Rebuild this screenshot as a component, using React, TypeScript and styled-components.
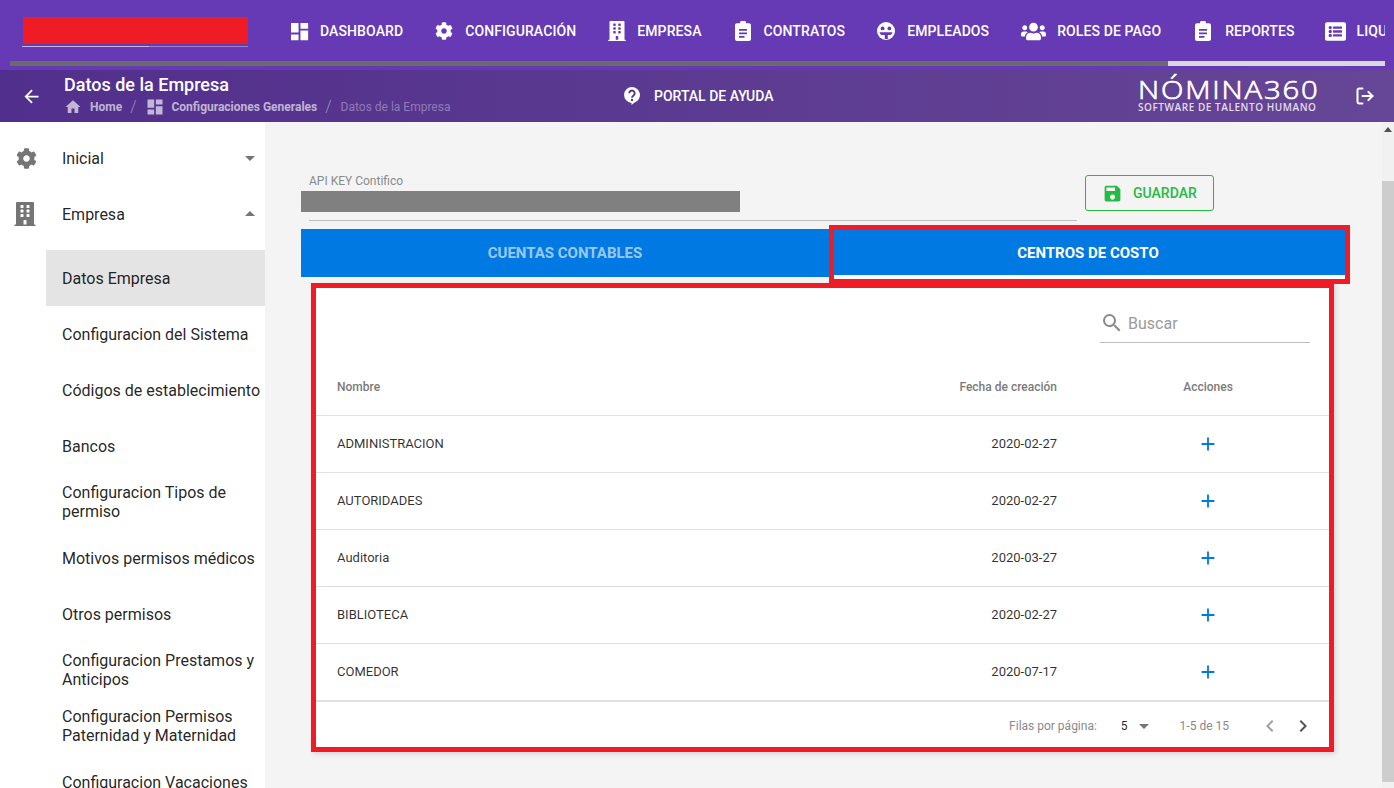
import React from 'react';
import styled, { createGlobalStyle } from 'styled-components';
import { FaBuilding, FaCog, FaListAlt, FaUsers } from 'react-icons/fa';
import {
  MdAdd,
  MdArrowBack,
  MdArrowDropDown,
  MdArrowDropUp,
  MdChevronLeft,
  MdChevronRight,
  MdDashboard,
  MdHome,
  MdSave,
  MdSearch
} from 'react-icons/md';
import { LogOut } from 'lucide-react';

const GlobalStyle = createGlobalStyle`
  html, body {
    margin: 0;
    height: 100%;
    overflow: hidden;
    font-family: Roboto, "Liberation Sans", sans-serif;
    background: #f4f4f4;
  }
  * {
    box-sizing: border-box;
  }
`;

const FaceIcon = () => (
  <svg width="18" height="18" viewBox="0 0 18 18">
    <circle cx="9" cy="9" r="9" fill="#fff" />
    <circle cx="5.6" cy="6.4" r="1.9" fill="#6639b5" />
    <circle cx="12.4" cy="6.4" r="1.9" fill="#6639b5" />
    <path d="M2.5 10.2h13c-.2 1.2-.9 2.2-2 2.8h-2.7v4h-3v-4H4.500c-1.100-.6-1.800-1.600-2-2.800z" fill="#6639b5" />
  </svg>
);

const HelpIcon = () => (
  <svg width="16" height="18" viewBox="0 0 16 18">
    <path d="M8 0a8 8 0 0 1 2.300 15.660L7.500 18v-2.020A8 8 0 0 1 8 0z" fill="#fff" />
    <path d="M5.300 6.200a2.700 2.700 0 1 1 4.300 2.200c-1 .7-1.600 1.100-1.600 2.300" fill="none" stroke="#58348f" strokeWidth="1.900" />
    <circle cx="8" cy="13" r="1.200" fill="#58348f" />
  </svg>
);

const ClipboardIcon = () => (
  <svg width="16" height="20" viewBox="0 0 16 20">
    <path
      d="M5 2.200V1.500C5 .7 5.700 0 6.500 0h3c.8 0 1.500.7 1.500 1.500v.7h3c1.100 0 2 .9 2 2V18c0 1.100-.9 2-2 2H2c-1.100 0-2-.9-2-2V4.200c0-1.100.9-2 2-2h3z"
      fill="#fff"
    />
    <path d="M4 8h8v1.700H4zM4 11.500h8v1.700H4zM4 15h5.500v1.700H4z" fill="#6639b5" />
  </svg>
);

const navItems = [
  { label: 'DASHBOARD', icon: <MdDashboard size={23} />, slot: 17 },
  { label: 'CONFIGURACIÓN', icon: <FaCog size={18} />, slot: 18 },
  { label: 'EMPRESA', icon: <FaBuilding size={20} />, slot: 17 },
  { label: 'CONTRATOS', icon: <ClipboardIcon />, slot: 18 },
  { label: 'EMPLEADOS', icon: <FaceIcon />, slot: 18 },
  { label: 'ROLES DE PAGO', icon: <FaUsers size={25} />, slot: 24 },
  { label: 'REPORTES', icon: <ClipboardIcon />, slot: 20 },
  { label: 'LIQUIDACIONES', icon: <FaListAlt size={21} />, slot: 18 }
];

const menuItems = [
  'Configuracion del Sistema',
  'Códigos de establecimiento',
  'Bancos',
  'Configuracion Tipos de permiso',
  'Motivos permisos médicos',
  'Otros permisos',
  'Configuracion Prestamos y Anticipos',
  'Configuracion Permisos Paternidad y Maternidad',
  'Configuracion Vacaciones'
];

const costCenters = [
  { name: 'ADMINISTRACION', date: '2020-02-27' },
  { name: 'AUTORIDADES', date: '2020-02-27' },
  { name: 'Auditoria', date: '2020-03-27' },
  { name: 'BIBLIOTECA', date: '2020-02-27' },
  { name: 'COMEDOR', date: '2020-07-17' }
];

export default function App() {
  return (
    <Page>
      <GlobalStyle />
      <TopBar>
        <TopRow>
          <Brand>
            <RedactedName />
            <BrandLine />
          </Brand>
          <Nav>
            {navItems.map((item) => (
              <NavItem key={item.label}>
                <NavIcon $width={item.slot}>{item.icon}</NavIcon>
                {item.label}
              </NavItem>
            ))}
          </Nav>
        </TopRow>
        <NavScrollTrack>
          <NavScrollThumb />
        </NavScrollTrack>
      </TopBar>

      <SubHeader>
        <BackButton>
          <MdArrowBack size={21} />
        </BackButton>
        <TitleBlock>
          <PageTitle>Datos de la Empresa</PageTitle>
          <Breadcrumb>
            <MdHome size={18} />
            <Crumb>Home</Crumb>
            <CrumbSlash>/</CrumbSlash>
            <CrumbIcon>
              <MdDashboard size={20} />
            </CrumbIcon>
            <Crumb>Configuraciones Generales</Crumb>
            <CrumbSlash>/</CrumbSlash>
            <CrumbCurrent>Datos de la Empresa</CrumbCurrent>
          </Breadcrumb>
        </TitleBlock>
        <HelpLink>
          <HelpIcon />
          PORTAL DE AYUDA
        </HelpLink>
        <Logo>
          <LogoName>NÓMINA360</LogoName>
          <LogoTag>SOFTWARE DE TALENTO HUMANO</LogoTag>
        </Logo>
        <LogoutButton>
          <LogOut size={20} strokeWidth={2.4} />
        </LogoutButton>
      </SubHeader>

      <Body>
        <Sidebar>
          <MenuHead>
            <MenuIcon $inset={3}>
              <FaCog size={21} />
            </MenuIcon>
            <MenuHeadLabel>Inicial</MenuHeadLabel>
            <MdArrowDropDown size={24} />
          </MenuHead>
          <MenuHead>
            <MenuIcon $inset={0}>
              <FaBuilding size={24} />
            </MenuIcon>
            <MenuHeadLabel>Empresa</MenuHeadLabel>
            <MdArrowDropUp size={24} />
          </MenuHead>
          <SubMenu>
            <SubItem $active>Datos Empresa</SubItem>
            {menuItems.map((label) => (
              <SubItem key={label}>{label}</SubItem>
            ))}
          </SubMenu>
        </Sidebar>

        <Main>
          <FormRow>
            <Field>
              <FieldLabel>API KEY Contifico</FieldLabel>
              <RedactedValue />
              <FieldLine />
            </Field>
            <SaveButton>
              <MdSave size={21} />
              GUARDAR
            </SaveButton>
          </FormRow>

          <Tabs>
            <Tab $width={528}>CUENTAS CONTABLES</Tab>
            <ActiveTab $width={518}>CENTROS DE COSTO</ActiveTab>
          </Tabs>

          <Card>
            <Toolbar>
              <SearchBox>
                <MdSearch size={24} />
                Buscar
              </SearchBox>
            </Toolbar>
            <HeadRow>
              <NameCell>Nombre</NameCell>
              <DateCell>Fecha de creación</DateCell>
              <ActionCell>Acciones</ActionCell>
            </HeadRow>
            {costCenters.map((row) => (
              <DataRow key={row.name}>
                <NameCell>{row.name}</NameCell>
                <DateCell>{row.date}</DateCell>
                <ActionCell>
                  <MdAdd size={22} />
                </ActionCell>
              </DataRow>
            ))}
            <TableFooter>
              <FooterText>Filas por página:</FooterText>
              <PageSize>
                5
                <MdArrowDropDown size={24} />
              </PageSize>
              <FooterRange>1-5 de 15</FooterRange>
              <PagerButton $disabled>
                <MdChevronLeft size={24} />
              </PagerButton>
              <PagerButton>
                <MdChevronRight size={24} />
              </PagerButton>
            </TableFooter>
          </Card>
        </Main>

        <PageScroll>
          <ScrollArrow />
          <PageScrollThumb />
        </PageScroll>
      </Body>
    </Page>
  );
}

const Page = styled.div`
  height: 788px;
  display: flex;
  flex-direction: column;
  overflow: hidden;
  background: #f4f4f4;
`;

const TopBar = styled.header`
  height: 70px;
  flex: none;
  background: #6639b5;
`;

const TopRow = styled.div`
  height: 61px;
  display: flex;
  padding: 17px 9px 0 22px;
`;

const Brand = styled.div`
  width: 226px;
  flex: none;
`;

const RedactedName = styled.div`
  height: 27px;
  margin-left: 1px;
  background: #ef1c25;
`;

const BrandLine = styled.div`
  height: 1px;
  margin-top: 2px;
  background: linear-gradient(to right, #c4b6dc 56%, #9c84c9 56%);
`;

const Nav = styled.nav`
  display: flex;
  gap: 32px;
  height: 28px;
  margin-left: 43px;
  overflow: hidden;
  flex: 1;
`;

const NavItem = styled.a`
  display: flex;
  align-items: center;
  gap: 12px;
  flex: none;
  color: #fff;
  font-size: 14px;
  font-weight: 500;
  letter-spacing: 0.1px;
`;

const NavIcon = styled.span<{ $width: number }>`
  display: flex;
  justify-content: center;
  width: ${(p) => p.$width}px;

  svg {
    flex: none;
  }
`;

const NavScrollTrack = styled.div`
  height: 5px;
  width: 1375px;
  margin-left: 10px;
  background: #d9d9d9;
`;

const NavScrollThumb = styled.div`
  height: 100%;
  width: 1158px;
  background: #6b6b6b;
`;

const SubHeader = styled.div`
  height: 52px;
  flex: none;
  display: flex;
  align-items: center;
  color: #fff;
  background: linear-gradient(to right, #512f8c, #664696);
`;

const BackButton = styled.span`
  width: 64px;
  flex: none;
  display: flex;
  padding: 0 0 0 21px;
`;

const TitleBlock = styled.div`
  width: 560px;
  flex: none;
`;

const PageTitle = styled.div`
  font-size: 18px;
  font-weight: 500;
  line-height: 22px;
  margin-top: -3px;
`;

const Breadcrumb = styled.div`
  display: flex;
  align-items: center;
  height: 18px;
  margin-top: 2px;
  color: rgba(255, 255, 255, 0.65);

  svg {
    flex: none;
  }
`;

const CrumbIcon = styled.span`
  display: flex;
  margin-right: -2px;
`;

const Crumb = styled.span`
  font-size: 12px;
  font-weight: 700;
  margin-left: 8px;
`;

const CrumbSlash = styled.span`
  font-size: 16px;
  font-weight: 300;
  margin: 0 9px 0 8px;
  color: rgba(255, 255, 255, 0.45);
`;

const CrumbCurrent = styled.span`
  font-size: 12px;
  color: rgba(255, 255, 255, 0.35);
`;

const HelpLink = styled.a`
  display: flex;
  align-items: center;
  gap: 14px;
  width: 514px;
  flex: none;
  font-size: 14px;
  font-weight: 500;
`;

const Logo = styled.div`
  width: 217px;
  flex: none;
  font-family: "Open Sans", sans-serif;
`;

const LogoName = styled.div`
  font-size: 25px;
  font-weight: 300;
  line-height: 23px;
  letter-spacing: 1.6px;
  -webkit-text-stroke: 0.7px #fff;
  transform: translateY(-2px) scaleX(1.17);
  transform-origin: left center;
`;

const LogoTag = styled.div`
  font-size: 10px;
  font-weight: 600;
  line-height: 9px;
  letter-spacing: 0.55px;
  white-space: nowrap;
  color: #e4dcef;
`;

const LogoutButton = styled.span`
  display: flex;
`;

const Body = styled.div`
  flex: 1;
  min-height: 0;
  display: flex;
`;

const Sidebar = styled.aside`
  width: 265px;
  flex: none;
  padding-top: 8px;
  overflow: hidden;
  background: #fff;
  color: rgba(0, 0, 0, 0.87);
  font-size: 16px;
  line-height: 19px;
`;

const MenuHead = styled.div`
  height: 56px;
  display: flex;
  align-items: center;
  padding: 0 3px 0 13px;
  color: #757575;
`;

const MenuIcon = styled.span<{ $inset: number }>`
  width: 49px;
  flex: none;
  display: flex;
  padding-left: ${(p) => p.$inset}px;
`;

const MenuHeadLabel = styled.span`
  flex: 1;
  color: rgba(0, 0, 0, 0.87);
`;

const SubMenu = styled.div`
  margin: 8px 0 0 46px;
`;

const SubItem = styled.div<{ $active?: boolean }>`
  height: 56px;
  display: flex;
  align-items: center;
  padding: 0 5px 0 16px;
  background: ${(p) => (p.$active ? '#e4e4e4' : 'transparent')};
`;

const Main = styled.main`
  flex: 1;
  min-width: 0;
  padding: 53px 0 0 36px;
`;

const FormRow = styled.div`
  display: flex;
  align-items: flex-start;
  gap: 8px;
  height: 54px;
`;

const Field = styled.div`
  width: 776px;
`;

const FieldLabel = styled.div`
  font-size: 12px;
  line-height: 12px;
  padding-left: 8px;
  color: #8b8b8b;
`;

const RedactedValue = styled.div`
  width: 439px;
  height: 21px;
  margin-top: 4px;
  background: #808080;
`;

const FieldLine = styled.div`
  height: 1px;
  margin: 8px 0 0 8px;
  background: #bdbdbd;
`;

const SaveButton = styled.button`
  width: 129px;
  height: 36px;
  display: flex;
  align-items: center;
  gap: 10px;
  padding: 0 0 0 16px;
  border: 1px solid #22bb44;
  border-radius: 3px;
  background: transparent;
  color: #22bb44;
  font-family: inherit;
  font-size: 14px;
  font-weight: 500;
`;

const Tabs = styled.div`
  display: flex;
  height: 48px;
  width: 1046px;
`;

const Tab = styled.div<{ $width: number }>`
  width: ${(p) => p.$width}px;
  display: flex;
  align-items: center;
  justify-content: center;
  background: #0179e3;
  color: rgba(255, 255, 255, 0.62);
  font-size: 15px;
  font-weight: 700;
`;

/* the red frame and the white line lie over the tab */
const ActiveTab = styled(Tab)`
  position: relative;
  color: #fff;

  &::before {
    content: '';
    position: absolute;
    left: 5px;
    right: 2px;
    top: 46px;
    height: 4px;
    background: #fff;
  }

  &::after {
    content: '';
    position: absolute;
    left: 0;
    right: -3px;
    top: -4px;
    bottom: -7px;
    border: 5px solid #ef1c25;
  }
`;

const Card = styled.section`
  width: 1023px;
  height: 469px;
  margin: 6px 0 0 10px;
  border: 5px solid #ef1c25;
  background: #fff;
  box-shadow: 2px 2px 5px rgba(0, 0, 0, 0.12);
`;

const Toolbar = styled.div`
  height: 70px;
  display: flex;
  justify-content: flex-end;
  padding: 22px 19px 0 0;
`;

const SearchBox = styled.div`
  width: 210px;
  height: 33px;
  display: flex;
  align-items: center;
  gap: 4px;
  padding-bottom: 6px;
  border-bottom: 1px solid #bdbdbd;
  color: #9a9a9a;
  font-size: 16px;

  svg {
    color: #8a8a8a;
  }
`;

const HeadRow = styled.div`
  height: 58px;
  display: grid;
  grid-template-columns: 1fr 140px 242px;
  align-items: center;
  border-bottom: 1px solid #e0e0e0;
  color: #7b7b7b;
  font-size: 12px;
  font-weight: 500;
`;

const NameCell = styled.div`
  padding-left: 21px;
`;

const DateCell = styled.div`
  padding-right: 30px;
  text-align: right;
  white-space: nowrap;
`;

const DataRow = styled.div`
  height: 57px;
  display: grid;
  grid-template-columns: 1fr 140px 242px;
  align-items: center;
  border-bottom: 1px solid #e0e0e0;
  color: rgba(0, 0, 0, 0.82);
  font-size: 13px;

  ${NameCell}, ${DateCell} {
    padding-bottom: 2px;
  }
`;

const ActionCell = styled.div`
  display: flex;
  justify-content: center;
  color: #0179e3;

  ${HeadRow} & {
    color: inherit;
  }
`;

const TableFooter = styled.div`
  height: 46px;
  display: flex;
  align-items: center;
  justify-content: flex-end;
  padding: 2px 14px 0 0;
  border-top: 1px solid #e0e0e0;
  color: #8a8a8a;
  font-size: 12px;
`;

const FooterText = styled.span``;

const PageSize = styled.span`
  display: flex;
  align-items: center;
  gap: 4px;
  margin-left: 24px;
  color: rgba(0, 0, 0, 0.87);

  svg {
    color: #757575;
  }
`;

const FooterRange = styled.span`
  margin: 0 20px 0 24px;
`;

const PagerButton = styled.span<{ $disabled?: boolean }>`
  display: flex;
  margin-left: 9px;
  color: ${(p) => (p.$disabled ? '#9e9e9e' : '#555')};

  &:first-of-type {
    margin-left: 0;
  }
`;

const PageScroll = styled.div`
  width: 12px;
  flex: none;
  display: flex;
  flex-direction: column;
  align-items: center;
  background: #f1f1f1;
`;

const ScrollArrow = styled.div`
  width: 0;
  height: 0;
  margin-top: 5px;
  border-left: 4px solid transparent;
  border-right: 4px solid transparent;
  border-bottom: 5px solid #505050;
`;

const PageScrollThumb = styled.div`
  width: 100%;
  height: 601px;
  margin-top: 49px;
  background: #cdcdcd;
`;
